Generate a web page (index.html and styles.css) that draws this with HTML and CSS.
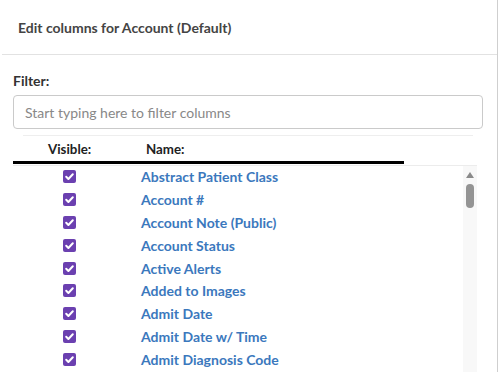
FILE: index.html
```html
<!DOCTYPE html>
<html lang="en">

<head>
    <meta charset="UTF-8">
    <meta name="viewport" content="width=device-width, initial-scale=1.0">
    <title>Edit columns</title>
    <link rel="stylesheet" href="styles.css">
</head>

<body>
    <div class="dialog">
        <div class="dialog-header">Edit columns for Account (Default)</div>
        <div class="dialog-body">
            <label class="filter-label" for="filter">Filter:</label>
            <input id="filter" class="filter-input" type="text" placeholder="Start typing here to filter columns">

            <div class="columns">
                <div class="columns-head">
                    <span class="head-visible">Visible:</span>
                    <span class="head-name">Name:</span>
                </div>
                <div class="columns-list">
                    <div class="rows">
                        <div class="row"><span class="check"><svg viewBox="0 0 13 13"><path d="M3.2 6.8 5.4 9 9.8 4.2" /></svg></span><a class="col-name">Abstract Patient Class</a></div>
                        <div class="row"><span class="check"><svg viewBox="0 0 13 13"><path d="M3.2 6.8 5.4 9 9.8 4.2" /></svg></span><a class="col-name">Account #</a></div>
                        <div class="row"><span class="check"><svg viewBox="0 0 13 13"><path d="M3.2 6.8 5.4 9 9.8 4.2" /></svg></span><a class="col-name">Account Note (Public)</a></div>
                        <div class="row"><span class="check"><svg viewBox="0 0 13 13"><path d="M3.2 6.8 5.4 9 9.8 4.2" /></svg></span><a class="col-name">Account Status</a></div>
                        <div class="row"><span class="check"><svg viewBox="0 0 13 13"><path d="M3.2 6.8 5.4 9 9.8 4.2" /></svg></span><a class="col-name">Active Alerts</a></div>
                        <div class="row"><span class="check"><svg viewBox="0 0 13 13"><path d="M3.2 6.8 5.4 9 9.8 4.2" /></svg></span><a class="col-name">Added to Images</a></div>
                        <div class="row"><span class="check"><svg viewBox="0 0 13 13"><path d="M3.2 6.8 5.4 9 9.8 4.2" /></svg></span><a class="col-name">Admit Date</a></div>
                        <div class="row"><span class="check"><svg viewBox="0 0 13 13"><path d="M3.2 6.8 5.4 9 9.8 4.2" /></svg></span><a class="col-name">Admit Date w/ Time</a></div>
                        <div class="row"><span class="check"><svg viewBox="0 0 13 13"><path d="M3.2 6.8 5.4 9 9.8 4.2" /></svg></span><a class="col-name">Admit Diagnosis Code</a></div>
                    </div>
                    <div class="scrollbar">
                        <span class="scroll-up"></span>
                        <span class="scroll-thumb"></span>
                    </div>
                </div>
            </div>
        </div>
    </div>
</body>

</html>
```

FILE: styles.css
```css
body {
    margin: 0;
    background-color: #fff;
    font-family: Lato, "Open Sans", sans-serif;
}

.dialog {
    width: 498px;
    height: 100vh;
    box-sizing: border-box;
    border-right: 1px solid #cfcfcf;
    overflow: hidden;
}

.dialog-header {
    height: 54px;
    margin-left: 2px;
    padding-left: 16px;
    display: flex;
    align-items: center;
    border-bottom: 1px solid #e2e2e2;
    font-size: 14px;
    font-weight: 700;
    color: #444;
}

.dialog-body {
    padding: 0 0 0 13px;
}

.filter-label {
    display: block;
    margin-top: 17px;
    font-size: 14px;
    line-height: 17px;
    font-weight: 700;
    color: #333;
}

.filter-input {
    display: block;
    margin-top: 6px;
    width: 470px;
    height: 34px;
    box-sizing: border-box;
    padding: 0 11px;
    border: 1px solid #cacaca;
    border-radius: 4px;
    font-family: Lato, "Open Sans", sans-serif;
    font-size: 14px;
    color: #333;
}

.filter-input::placeholder {
    color: #888;
}

.columns {
    margin-top: 6px;
    width: 464px;
}

.columns-head {
    margin: 0 4px 0 10px;
    border-top: 1px solid #eee;
    padding-top: 3px;
    height: 22px;
    line-height: 20px;
    font-size: 13.3px;
    font-weight: 700;
    color: #222;
    display: flex;
    position: relative;
}

.columns-head::after {
    content: "";
    position: absolute;
    left: -10px;
    bottom: -3px;
    width: 391px;
    height: 3px;
    background-color: #000;
}

.head-visible {
    margin-left: 25px;
    width: 98px;
}

.columns-list {
    margin-top: 4px;
    border-top: 1px solid #ececec;
    display: flex;
    height: 240px;
}

.rows {
    flex: 1;
    margin-top: -1px;
}

.row {
    display: grid;
    grid-template-columns: 128px 1fr;
    align-items: center;
    height: 22.9px;
}

.check {
    margin-left: 50px;
    width: 13px;
    height: 13px;
    border-radius: 2px;
    background-color: #6b40b0;
    display: flex;
}

.check svg {
    width: 13px;
    height: 13px;
}

.check path {
    fill: none;
    stroke: #fff;
    stroke-width: 2;
    stroke-linecap: round;
    stroke-linejoin: round;
}

.col-name {
    font-size: 14px;
    line-height: 17px;
    font-weight: 700;
    color: #3b78bd;
    cursor: pointer;
}

.scrollbar {
    width: 14px;
    background-color: #f8f8f8;
    display: flex;
    flex-direction: column;
    align-items: center;
}

.scroll-up {
    margin-top: 6px;
    width: 0;
    height: 0;
    border-left: 4px solid transparent;
    border-right: 4px solid transparent;
    border-bottom: 6px solid #8a8a8a;
}

.scroll-thumb {
    margin-top: 6px;
    width: 8px;
    height: 24px;
    border-radius: 4px;
    background-color: #949494;
}
```
